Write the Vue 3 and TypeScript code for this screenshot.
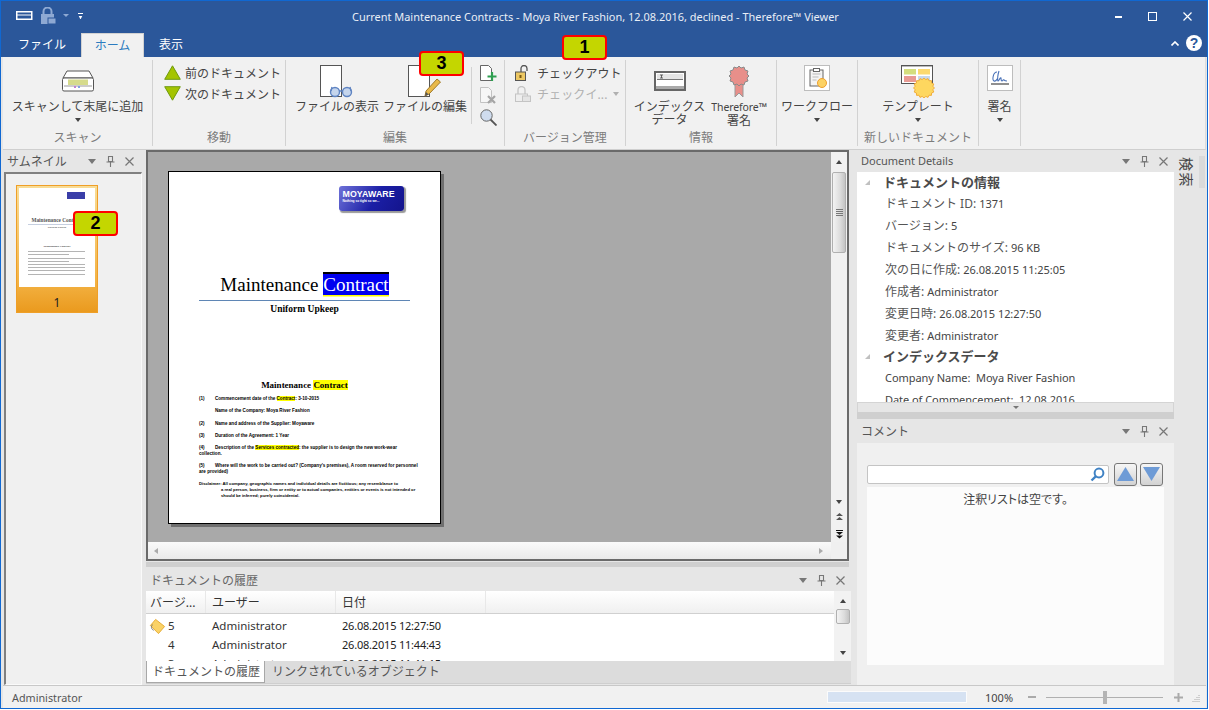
<script setup lang="ts">
const details = [
  ['ドキュメント ID:', '1371'],
  ['バージョン:', '5'],
  ['ドキュメントのサイズ:', '96 KB'],
  ['次の日に作成:', '26.08.2015 11:25:05'],
  ['作成者:', 'Administrator'],
  ['変更日時:', '26.08.2015 12:27:50'],
  ['変更者:', 'Administrator'],
]
const rows = [
  { v: '5', u: 'Administrator', d: '26.08.2015 12:27:50', tag: true },
  { v: '4', u: 'Administrator', d: '26.08.2015 11:44:43', tag: false },
  { v: '3', u: 'Administrator', d: '26.08.2015 11:41:15', tag: false },
]
</script>

<template>
  <div class="screen">
    <div class="window">
      <header class="titlebar">
        <div class="qat">
          <svg class="qa1" width="17" height="9" viewBox="0 0 17 9"><rect x=".75" y=".75" width="15" height="7.5" fill="none" stroke="#fff" stroke-width="1.5"/><path d="M1 4h15" stroke="#fff"/></svg>
          <svg class="qa2" width="17" height="17" viewBox="0 0 17 17"><path d="M3.5 7V4.5a4 4 0 0 1 8 0V7" fill="none" stroke="#8ea9d3" stroke-width="2"/><rect x="1" y="7" width="13" height="10" fill="#8ea9d3"/><rect x="8" y="11" width="8" height="6" fill="#8ea9d3" stroke="#2b579a"/></svg>
          <span class="qa-arrow dim"></span>
          <span class="qa-menu"></span>
        </div>
        <div class="title">Current Maintenance Contracts - Moya River Fashion, 12.08.2016, declined - Therefore™ Viewer</div>
        <div class="winctl">
          <svg width="7" height="3" viewBox="0 0 7 3"><rect width="7" height="2" y="1" fill="#fff"/></svg>
          <svg width="9" height="9" viewBox="0 0 9 9"><rect x=".5" y=".5" width="8" height="8" fill="none" stroke="#fff"/></svg>
          <svg width="9" height="9" viewBox="0 0 9 9"><path d="M.5.5l8 8M8.5.5l-8 8" stroke="#fff" stroke-width="1.2"/></svg>
        </div>
      </header>

      <nav class="tabs">
        <span class="tab">ファイル</span>
        <span class="tab active">ホーム</span>
        <span class="tab">表示</span>
        <div class="tabs-right">
          <svg width="8" height="5" viewBox="0 0 8 5"><path d="M.5 4.5L4 1l3.5 3.5" fill="none" stroke="#fff" stroke-width="1.6"/></svg>
          <span class="help">?</span>
        </div>
      </nav>

      <section class="ribbon">
        <div class="group g1">
          <div class="gbody center">
            <button class="big">
              <span class="ico">
                <svg width="34" height="22" viewBox="0 0 34 22"><path d="M6 1h22l4 7H2z" fill="#fff" stroke="#555"/><rect x="1.5" y="8" width="31" height="13" rx="1.5" fill="#fff" stroke="#555"/><rect x="7" y="9.5" width="20" height="5.5" fill="#d6db8c"/><path d="M3 16h28" stroke="#999"/><rect x="13" y="16" width="2" height="2" fill="#c080d0"/><rect x="17" y="16" width="2" height="2" fill="#80a0e0"/></svg>
              </span>
              <span class="lbl">スキャンして末尾に追加</span>
              <span class="drop"></span>
            </button>
          </div>
          <div class="gname">スキャン</div>
        </div>

        <div class="group g2">
          <div class="gbody rows">
            <div class="srow"><svg width="17" height="15" viewBox="0 0 17 15"><path d="M8.5 .8L16.3 14.3H.7z" fill="#a4c400" stroke="#6f9a10"/></svg><span>前のドキュメント</span></div>
            <div class="srow"><svg width="17" height="15" viewBox="0 0 17 15"><path d="M8.5 14.2L16.3 .7H.7z" fill="#a4c400" stroke="#6f9a10"/></svg><span>次のドキュメント</span></div>
          </div>
          <div class="gname">移動</div>
        </div>

        <div class="group g3">
          <div class="gbody g3body">
            <button class="big b-view">
              <span class="ico">
                <svg width="34" height="33" viewBox="0 0 34 33"><rect x=".5" y=".5" width="21" height="31" fill="#fff" stroke="#555"/><circle cx="15" cy="27" r="4.5" fill="#c5d5ec" stroke="#5f84c2" stroke-width="1.4"/><circle cx="27" cy="27" r="4.5" fill="#c5d5ec" stroke="#5f84c2" stroke-width="1.4"/><path d="M19 26h4M11 26l1-4M31 26l-1-4" stroke="#5f84c2" stroke-width="1.4" fill="none"/></svg>
              </span>
              <span class="lbl">ファイルの表示</span>
            </button>
            <button class="big b-edit">
              <span class="ico">
                <svg width="34" height="33" viewBox="0 0 34 33"><rect x=".5" y=".5" width="21" height="31" fill="#fff" stroke="#555"/><path d="M17 31l1-5L29 14l3.5 3L21 29z" fill="#e9b949" stroke="#a07a2a"/><path d="M17 31l1-4 2.6 2.4z" fill="#555"/></svg>
              </span>
              <span class="lbl">ファイルの編集</span>
            </button>
            <span class="vsep"></span>
            <div class="mini">
              <svg width="17" height="17" viewBox="0 0 17 17"><path d="M.5.5h8l3 3v12h-11z" fill="#fff" stroke="#666"/><path d="M12 7v9M7.5 11.5h9" stroke="#2e9e50" stroke-width="2.2"/></svg>
              <svg width="17" height="17" viewBox="0 0 17 17"><path d="M.5.5h8l3 3v12h-11z" fill="#f6f6f6" stroke="#c2c2c2"/><path d="M8 9l7 7M15 9l-7 7" stroke="#a5a5a5" stroke-width="2.2"/></svg>
              <svg width="17" height="17" viewBox="0 0 17 17"><circle cx="6.5" cy="6.5" r="5.7" fill="#cfdcee" stroke="#666"/><path d="M10.5 10.5l6 6" stroke="#555" stroke-width="1.8"/></svg>
            </div>
          </div>
          <div class="gname">編集</div>
        </div>

        <div class="group g4">
          <div class="gbody rows">
            <div class="srow lk"><svg width="16" height="16" viewBox="0 0 16 16"><path d="M6 7V3.5a3 3 0 0 1 6 0V6" fill="none" stroke="#555" stroke-width="1.3"/><rect x=".5" y="7" width="10" height="8.5" fill="#ecc763" stroke="#555"/><rect x="4.5" y="10" width="2" height="3" fill="#7a5a10"/></svg><span>チェックアウト</span></div>
            <div class="srow lk off"><svg width="16" height="16" viewBox="0 0 16 16"><path d="M3 8V4a3.5 3.5 0 0 1 7 0v4" fill="none" stroke="#c4c4c4" stroke-width="1.3"/><rect x=".5" y="8" width="12" height="7.5" fill="#eee" stroke="#c4c4c4"/><rect x="7.5" y="10" width="8" height="5.5" fill="#e4e4e4" stroke="#c4c4c4"/></svg><span>チェックイ...</span><i class="drop-inline"></i></div>
          </div>
          <div class="gname">バージョン管理</div>
        </div>

        <div class="group g5">
          <div class="gbody g5body">
            <button class="big b-index">
              <span class="ico">
                <svg width="32" height="20" viewBox="0 0 32 20"><rect x="1" y="1" width="30" height="18" fill="#fff" stroke="#666" stroke-width="2"/><rect x="3" y="3" width="26" height="5" fill="#e4e4e4"/><path d="M3 8.5h26" stroke="#777"/><path d="M6 4h3M7.5 4v3M6 7h3" stroke="#444" stroke-width=".8"/><path d="M2 16.5h28" stroke="#aaa" stroke-width="3"/></svg>
              </span>
              <span class="lbl two">インデックス<br>データ</span>
            </button>
            <button class="big b-sign">
              <span class="ico">
                <svg width="20" height="33" viewBox="0 0 20 33"><path d="M6 16v16l4-4 4 4V16z" fill="#e88f8a" stroke="#999"/><path d="M10 1l2 2 3-1 1 3 3 1-1 3 2 2-2 2 1 3-3 1-1 3-3-1-2 2-2-2-3 1-1-3-3-1 1-3-2-2 2-2-1-3 3-1 1-3 3 1z" fill="#e88f8a" stroke="#8b8b8b"/></svg>
              </span>
              <span class="lbl two"><small>Therefore™</small><br>署名</span>
            </button>
          </div>
          <div class="gname">情報</div>
        </div>

        <div class="group g6">
          <div class="gbody center">
            <button class="big">
              <span class="ico">
                <span class="sq">
                  <svg width="24" height="24" viewBox="0 0 24 24"><rect x="5" y="4" width="13" height="16" fill="#f4f4f4" stroke="#666"/><rect x="8.5" y="2.5" width="6" height="3" fill="#fff" stroke="#666"/><path d="M7.5 8h8M7.5 11h6M7.5 14h4" stroke="#bbb"/><circle cx="17" cy="17" r="4.5" fill="#fcd264" stroke="#ee9f2e"/></svg>
                </span>
              </span>
              <span class="lbl">ワークフロー</span>
              <span class="drop"></span>
            </button>
          </div>
        </div>

        <div class="group g7">
          <div class="gbody center">
            <button class="big">
              <span class="ico">
                <svg width="34" height="33" viewBox="0 0 34 33"><rect x=".5" y=".5" width="31" height="18" fill="#fff" stroke="#555"/><path d="M0 .7h32" stroke="#555" stroke-width="1.4"/><rect x="3" y="4" width="12" height="5.5" fill="#d4de7e"/><rect x="17" y="4" width="12" height="5.5" fill="#fcd96f"/><rect x="3" y="11" width="12" height="6" fill="#e89a94"/><rect x="17" y="11" width="12" height="6" fill="#c8d8ec"/><path d="M23 13l1.8 1.6 2.2-1 1 2.2 2.4-.2.2 2.4 2.2 1-1 2.2 1.6 1.8-1.6 1.8 1 2.2-2.2 1-.2 2.4-2.4-.2-1 2.2-2.2-1-1.8 1.6-1.8-1.6-2.2 1-1-2.2-2.4.2-.2-2.4-2.2-1 1-2.2-1.6-1.8 1.6-1.8-1-2.2 2.2-1 .2-2.4 2.4.2 1-2.2 2.2 1z" fill="#fed75f" stroke="#f1ad3a"/></svg>
              </span>
              <span class="lbl">テンプレート</span>
              <span class="drop"></span>
            </button>
          </div>
          <div class="gname">新しいドキュメント</div>
        </div>

        <div class="group g8">
          <div class="gbody center">
            <button class="big">
              <span class="ico">
                <span class="sq">
                  <svg width="24" height="24" viewBox="0 0 24 24"><path d="M9 6C5 6 4 14 6 15c2 1 3-2 4-3M11 5c-1 3-2 9-1 10 1 0 2-4 3-3 0 1 0 3 1 3 1 0 1-2 2-1s1 1 3 1" fill="none" stroke="#4a72b8" stroke-width="1.1"/><path d="M3 18h18" stroke="#444" stroke-width="1.2"/></svg>
                </span>
              </span>
              <span class="lbl">署名</span>
              <span class="drop"></span>
            </button>
          </div>
        </div>
      </section>

      <main class="workspace">
        <aside class="left">
          <div class="phead">
            <span class="ptitle">サムネイル</span>
            <span class="pctl pctl-left"><i class="tri"></i><svg width="9" height="11" viewBox="0 0 9 11"><path d="M2.5 .5h4v5h-4zM.5 6h8M4.5 6v5" fill="none" stroke="#777" stroke-width="1.1"/></svg><svg width="9" height="9" viewBox="0 0 9 9"><path d="M.5.5l8 8M8.5.5l-8 8" stroke="#777" stroke-width="1.2"/></svg></span>
          </div>
          <div class="thumbs">
            <div class="thumb">
              <div class="tpage">
                <div class="tlogo"></div>
                <div class="t-title">Maintenance Contract</div>
                <div class="t-rule"></div>
                <div class="t-sub">Uniform Upkeep</div>
                <div class="t-h">Maintenance Contract</div>
                <div class="t-l"></div><div class="t-l s"></div><div class="t-l"></div><div class="t-l s"></div><div class="t-l"></div><div class="t-l"></div><div class="t-l"></div><div class="t-l"></div>
              </div>
              <div class="tnum">1</div>
            </div>
          </div>
        </aside>

        <div class="center-col">
          <div class="viewer">
            <div class="vtop">
              <div class="canvas">
                <article class="page">
                  <div class="logo-row">
                    <div class="logo"><b>MOYAWARE</b><span>Nothing so tight so we...</span></div>
                  </div>
                  <h1 class="doc-title">Maintenance <mark class="sel">Contract</mark></h1>
                  <div class="doc-rule"></div>
                  <div class="doc-sub">Uniform Upkeep</div>
                  <h2 class="doc-h">Maintenance <mark>Contract</mark></h2>
                  <div class="cl"><em>(1)</em><span>Commencement date of the <mark>Contract</mark>: 3-10-2015</span></div>
                  <div class="cl g"><em></em><span>Name of the Company: Moya River Fashion</span></div>
                  <div class="cl"><em>(2)</em><span>Name and address of the Supplier: Moyaware</span></div>
                  <div class="cl"><em>(3)</em><span>Duration of the Agreement: 1 Year</span></div>
                  <div class="cl"><em>(4)</em><span>Description of the <mark>Services contracted</mark>: the supplier is to design the new work-wear</span></div>
                  <div class="cl2">collection.</div>
                  <div class="cl"><em>(5)</em><span>Where will the work to be carried out? (Company's premises), A room reserved for personnel</span></div>
                  <div class="cl2">are provided)</div>
                  <div class="disc">Disclaimer: All company, geographic names and individual details are fictitious; any resemblance to<br><span>a real person, business, firm or entity or to actual companies, entities or events is not intended or</span><br><span>should be inferred; purely coincidental.</span></div>
                </article>
              </div>
              <div class="vscroll">
                <i class="arr up"></i>
                <span class="thumbbar"><u></u></span>
                <span class="grow"></span>
                <i class="arr dn"></i>
                <svg class="jump" width="7" height="8" viewBox="0 0 7 8"><path d="M3.5 0L7 3H0zM3.5 4L7 7H0z" fill="#555"/></svg>
                <svg class="jump" width="7" height="9" viewBox="0 0 7 9"><path d="M0 .5h7" stroke="#111"/><path d="M0 2h7L3.5 5zM0 5.5h7L3.5 8.5z" fill="#111"/></svg>
              </div>
            </div>
            <div class="hscroll"><i class="arr lf"></i><span class="grow"></span><i class="arr rt"></i></div>
          </div>
          <div class="hsplit"></div>
          <div class="history">
            <div class="phead">
              <span class="ptitle muted">ドキュメントの履歴</span>
              <span class="pctl"><i class="tri"></i><svg width="9" height="11" viewBox="0 0 9 11"><path d="M2.5 .5h4v5h-4zM.5 6h8M4.5 6v5" fill="none" stroke="#777" stroke-width="1.1"/></svg><svg width="9" height="9" viewBox="0 0 9 9"><path d="M.5.5l8 8M8.5.5l-8 8" stroke="#777" stroke-width="1.2"/></svg></span>
            </div>
            <div class="hbody">
              <div class="table">
                <div class="thead">
                  <span class="c1">バージ...</span><span class="c2">ユーザー</span><span class="c3">日付</span>
                </div>
                <div v-for="r in rows" :key="r.v" class="trow">
                  <span class="c1 cell">
                    <svg v-if="r.tag" class="tag" width="17" height="17" viewBox="0 0 18 18"><path d="M7 1.5L16.5 9 10 16.5 1.5 8z" fill="#fad266" stroke="#e6a92e"/><path d="M4 7c-2 1-2 5 1 6" fill="none" stroke="#777"/></svg>
                    <span class="vnum">{{ r.v }}</span>
                  </span>
                  <span class="c2 cell">{{ r.u }}</span>
                  <span class="c3 cell date">{{ r.d }}</span>
                </div>
              </div>
              <div class="tscroll"><i class="arr up"></i><span class="thumbbar small"></span><span class="grow"></span><i class="arr dn"></i></div>
            </div>
            <div class="btabs">
              <span class="btab on">ドキュメントの履歴</span>
              <span class="btab">リンクされているオブジェクト</span>
            </div>
          </div>
        </div>

        <aside class="right">
          <div class="details">
            <div class="phead">
              <span class="ptitle latin">Document Details</span>
              <span class="pctl"><i class="tri"></i><svg width="9" height="11" viewBox="0 0 9 11"><path d="M2.5 .5h4v5h-4zM.5 6h8M4.5 6v5" fill="none" stroke="#777" stroke-width="1.1"/></svg><svg width="9" height="9" viewBox="0 0 9 9"><path d="M.5.5l8 8M8.5.5l-8 8" stroke="#777" stroke-width="1.2"/></svg></span>
            </div>
            <div class="dlist">
              <div class="dsec"><i class="corner"></i>ドキュメントの情報</div>
              <div v-for="d in details" :key="d[0]" class="ditem">{{ d[0] }} <span class="val">{{ d[1] }}</span></div>
              <div class="dsec second"><i class="corner"></i>インデックスデータ</div>
              <div class="ditem"><span class="val">Company Name:&nbsp; Moya River Fashion</span></div>
              <div class="ditem"><span class="val">Date of Commencement:&nbsp; 12.08.2016</span></div>
            </div>
            <div class="more"><i class="arr dn"></i></div>
          </div>
          <div class="hsplit tall"></div>
          <div class="comments">
            <div class="phead tallhead">
              <span class="ptitle">コメント</span>
              <span class="pctl"><i class="tri"></i><svg width="9" height="11" viewBox="0 0 9 11"><path d="M2.5 .5h4v5h-4zM.5 6h8M4.5 6v5" fill="none" stroke="#777" stroke-width="1.1"/></svg><svg width="9" height="9" viewBox="0 0 9 9"><path d="M.5.5l8 8M8.5.5l-8 8" stroke="#777" stroke-width="1.2"/></svg></span>
            </div>
            <div class="cbody">
              <div class="sline">
                <div class="search">
                  <svg width="15" height="15" viewBox="0 0 15 15"><circle cx="9" cy="6" r="4.4" fill="none" stroke="#3f82c4" stroke-width="2"/><path d="M6 9.2L1.5 13.5" stroke="#3f82c4" stroke-width="2.4"/></svg>
                </div>
                <button class="nav"><svg width="17" height="14" viewBox="0 0 17 14"><path d="M8.5 0L17 14H0z" fill="#6e9bd6"/></svg></button>
                <button class="nav"><svg width="17" height="14" viewBox="0 0 17 14"><path d="M8.5 14L17 0H0z" fill="#6e9bd6"/></svg></button>
              </div>
              <div class="clist">注釈リストは空です。</div>
            </div>
          </div>
        </aside>

        <div class="strip">
          <span class="vtext">検索</span>
          <span class="stripbar"></span>
        </div>
      </main>

      <footer class="status">
        <span class="suser">Administrator</span>
        <span class="grow"></span>
        <span class="prog"></span>
        <span class="pct">100%</span>
        <span class="minus"></span>
        <span class="track"><i></i></span>
        <svg class="plus" width="9" height="9" viewBox="0 0 9 9"><path d="M4.5 0v9M0 4.5h9" stroke="#aaa" stroke-width="2"/></svg>
        <svg class="grip" width="8" height="8" viewBox="0 0 8 8"><path d="M7 1v1M5 3v1M7 3v1M3 5v1M5 5v1M7 5v1M1 7v1M3 7v1M5 7v1M7 7v1" stroke="#aaa"/></svg>
      </footer>

      <span class="badge b1">1</span>
      <span class="badge b3">3</span>
      <span class="badge b2">2</span>
    </div>
    <div class="outside"></div>
  </div>
</template>

<style>
html, body { margin: 0; background: #fff; }
</style>

<style scoped>
.screen { width: 1209px; height: 710px; display: flex; overflow: hidden; font-family: "Noto Sans", "Noto Sans CJK JP", sans-serif; color: #444; font-size: 12px; }
.window { position: relative; width: 1208px; height: 709px; box-sizing: border-box; border: 1px solid #1068d2; background: #e6e6e6; display: flex; flex-direction: column; flex: none; }
.outside { width: 1px; background: #fff; }
button { all: unset; box-sizing: border-box; }
i { display: block; }
.grow { flex: 1; }

.titlebar { height: 32px; background: #2b579a; display: flex; align-items: center; position: relative; flex: none; }
.qat { display: flex; align-items: center; padding-left: 15px; }
.qa1 { margin-right: 7px; margin-top: -4px; }
.qa2 { margin-top: -4px; }
.qa-arrow { width: 0; height: 0; border: 3px solid transparent; border-top: 3px solid #8ea9d3; margin: 0 0 0 6px; }
.qa-menu { width: 5px; height: 6px; margin-left: 9px; margin-top: -2px; border-top: 1px solid #fff; position: relative; background: linear-gradient(#fff,#fff) center 2px / 5px 3px no-repeat; clip-path: polygon(0 0,100% 0,100% 30%,100% 30%,50% 100%,0 30%); }
.title { position: absolute; left: 351px; top: 8px; color: #e9eef6; font-size: 10.96px; line-height: 16px; white-space: nowrap; }
.winctl { margin-left: auto; display: flex; align-items: center; width: 92px; gap: 26px; margin-top: -1px; padding-right: 15px; box-sizing: border-box; justify-content: flex-end; }

.tabs { height: 24px; background: #2b579a; display: flex; align-items: stretch; position: relative; flex: none; padding-left: 2px; }
.tab { color: #fff; padding: 0 15px; line-height: 24px; font-size: 12px; white-space: nowrap; }
.tab.active { background: #f1f1f1; color: #2b7bc0; border: 1px solid #d2d2d2; border-bottom: 0; padding: 0; box-sizing: border-box; width: 63px; line-height: 23px; margin: 0; text-align: center; }
.tabs-right { position: absolute; right: 5px; top: 0; display: flex; align-items: center; gap: 7px; height: 20px; }
.help { width: 16px; height: 16px; border-radius: 50%; background: #fff; color: #2b579a; font: bold 14px/16px "Liberation Sans", sans-serif; text-align: center; margin-top: 0; }

.ribbon { height: 93px; flex: none; margin: 0 1px 0 2px; background: #f1f1f1; border-bottom: 1px solid #cfcfcf; border-right: 1px solid #dcdcdc; box-sizing: border-box; display: flex; padding-top: 3px; }
.group { display: flex; flex-direction: column; border-right: 1px solid #d2d2d2; box-sizing: border-box; height: 86px; flex: none; }
.g1 { width: 150px; } .g2 { width: 133px; } .g3 { width: 219px; } .g4 { width: 121px; }
.g5 { width: 151px; } .g6 { width: 81px; } .g7 { width: 121px; } .g8 { width: 42px; }
.gbody { flex: 1; display: flex; min-height: 0; }
.gbody.center { justify-content: center; }
.gname { height: 18px; line-height: 20px; text-align: center; color: #7c7c7c; font-size: 12px; white-space: nowrap; }
.big { display: flex; flex-direction: column; align-items: center; white-space: nowrap; color: #444; }
.ico { height: 40px; box-sizing: border-box; padding-top: 2px; display: flex; align-items: center; justify-content: center; }
.lbl { line-height: 13px; margin-top: 0; font-size: 12px; }
.lbl.two { line-height: 13px; text-align: center; }
.lbl small { font-size: 10.5px; font-family: "Noto Sans", sans-serif; letter-spacing: -.1px; }
.drop { width: 0; height: 0; border: 3px solid transparent; border-top: 4px solid #444; margin-top: 5px; }
.sq { width: 26px; height: 26px; box-sizing: border-box; border: 1px solid #bdbdbd; background: #fff; display: flex; align-items: center; justify-content: center; margin-top: -6px; }

.rows { flex-direction: column; padding-top: 2px; }
.srow { height: 21px; display: flex; align-items: center; white-space: nowrap; padding-left: 11px; gap: 4px; font-size: 12px; }
.srow svg { flex: none; }
.srow.lk { padding-left: 10px; gap: 6px; font-size: 12px; letter-spacing: .1px; }
.srow.off { color: #b0b0b0; }
.drop-inline { width: 0; height: 0; border: 3px solid transparent; border-top: 4px solid #b0b0b0; margin: 3px 0 0 0; }

.g3body { position: relative; padding-left: 7px; }
.b-view { width: 88px; }
.b-edit { width: 88px; }
.vsep { width: 1px; height: 57px; margin: 7px 0 0 2px; background: #d2d2d2; }
.mini { display: flex; flex-direction: column; gap: 5px; padding: 5px 0 0 8px; }

.g5body { padding-left: 6px; }
.b-index { width: 75px; }
.b-sign { width: 64px; margin-left: 0; }

.workspace { flex: 1; min-height: 0; display: flex; padding-left: 2px; }
.left { width: 139px; flex: none; display: flex; flex-direction: column; }
.phead { height: 22px; flex: none; display: flex; align-items: center; padding: 0 4px; justify-content: space-between; background: #e6e6e6; }
.ptitle { font-size: 12px; color: #555; white-space: nowrap; }
.ptitle.muted { color: #666; }
.ptitle.latin { font-size: 11px; margin-top: -1px; }
.pctl { display: flex; align-items: center; gap: 10px; margin-right: 2.5px; }
.pctl-left { margin-right: 4.5px; }
.tri { width: 0; height: 0; border: 4.5px solid transparent; border-top: 5px solid #777; border-bottom: 0; }

.thumbs { flex: 1; margin-left: 1px; margin-right: 0; border-top: 2px solid #808080; border-left: 2px solid #808080; background: #f0f0f0; box-sizing: border-box; padding: 11px 0 0 10px; border-right: 1px solid #fafafa; border-bottom: 1px solid #fafafa; }
.thumb { width: 82px; height: 128px; box-sizing: border-box; padding: 2px 2px 0; background: linear-gradient(#f8dd97, #f3b243 76%, #ea9a1e); border: 1px solid #ef9f27; display: flex; flex-direction: column; }
.tpage { height: 99px; flex: none; background: #fff; position: relative; padding-top: 29px; box-sizing: border-box; overflow: hidden; }
.tlogo { position: absolute; right: 10px; top: 4px; width: 18px; height: 7px; background: #3a3ea8; }
.t-title { font: 700 5.3px/7px "Liberation Serif", serif; text-align: center; color: #555; white-space: nowrap; overflow: hidden; }
.t-rule { height: 1px; margin: 0 9px; background: #c6cfe0; }
.t-sub { font: 700 2.6px/5px "Liberation Serif", serif; text-align: center; color: #666; }
.t-h { font: 700 2.8px/4px "Liberation Serif", serif; text-align: center; color: #444; margin: 15px 0 1px; }
.t-l { height: 1px; background: #b4b4b4; margin: 2.2px 10px 0 9px; }
.t-l.s { margin-right: 26px; }
.tnum { flex: 1; min-height: 0; text-align: center; line-height: 31px; color: #222; font-size: 12px; }

.center-col { width: 707px; margin-left: 4px; flex: none; display: flex; flex-direction: column; }
.viewer { height: 411px; flex: none; width: 703px; border: 2px solid #6a6a6a; box-sizing: border-box; display: flex; flex-direction: column; background: #f0f0f0; }
.vtop { flex: 1; min-height: 0; display: flex; }
.canvas { width: 683px; flex: none; background: #a9a9a9; padding: 19px 0 0 20px; box-sizing: border-box; }
.page { width: 273px; height: 353px; box-sizing: border-box; background: #fff; border: 1.5px solid #000; box-shadow: 3px 3px 0 #6f6f6f; color: #000; font-family: "Liberation Serif", serif; position: relative; padding: 0 30px; overflow: hidden; }
.logo-row { display: flex; justify-content: flex-end; height: 102px; padding-top: 13.5px; margin-right: 6.5px; box-sizing: border-box; }
.logo { width: 65px; height: 25px; border-radius: 3px; background: linear-gradient(120deg, #6f72d8, #1b1fa6 55%, #14148c); box-shadow: 1.5px 1.5px 1px #999; color: #fff; font-family: "Liberation Sans", sans-serif; display: flex; flex-direction: column; padding: 4px 0 0 4px; box-sizing: border-box; line-height: 1; }
.logo b { font-size: 8.8px; letter-spacing: .1px; font-weight: 700; }
.logo span { font-size: 3.2px; margin-top: 2px; font-weight: 700; white-space: nowrap; }
.doc-title { margin: 0 -4px; font-size: 19px; font-weight: 400; line-height: 21px; text-align: center; white-space: nowrap; height: 25px; }
.doc-title .sel { background: #0000f0; color: #fff; box-shadow: 0 1.5px 0 #ffff00, 0 -2px 0 #000; padding: 0; }
.doc-rule { height: 1px; background: #5f86b5; margin-top: 1px; }
.doc-sub { text-align: center; font-size: 9.5px; font-weight: 700; line-height: 15px; margin-top: 1px; }
.doc-h { margin: 62px 0 5px; font-size: 9px; font-weight: 700; line-height: 12px; text-align: center; }
.page mark { background: #ffff00; color: inherit; }
.page .sel { background: #0000f0; color: #fff; }
.cl { display: flex; font: 700 4.6px/6px "Liberation Sans", sans-serif; margin-bottom: 6px; white-space: nowrap; }
.cl em { width: 16px; font-style: normal; flex: none; }
.cl.g { margin-bottom: 6.5px; }
.cl2 { font: 700 4.6px/6px "Liberation Sans", sans-serif; margin: -6px 0 5.5px; padding-top: .5px; }
.disc { font: 700 4.2px/6px "Liberation Sans", sans-serif; margin: 0 -30px 0 0; padding-right: 30px; white-space: nowrap; }
.disc span { margin-left: 22px; }
.vscroll { width: 16px; flex: none; display: flex; flex-direction: column; align-items: center; background: #f1f1f1; padding-bottom: 3px; box-sizing: border-box; }
.thumbbar { width: 14px; height: 81px; flex: none; box-sizing: border-box; margin-top: 8px; border: 1px solid #b0b0b0; border-radius: 2px; background: linear-gradient(90deg, #f3f3f3, #dcdcdc 60%, #c4c4c4); display: flex; align-items: center; justify-content: center; }
.thumbbar u { width: 7px; height: 7px; text-decoration: none; background: repeating-linear-gradient(#777 0 1px, transparent 1px 2px); }
.thumbbar.small { height: 15px; margin-top: 6px; }
.jump { flex: none; margin-bottom: 9px; }
.jump:last-child { margin-bottom: 0; }
.arr { width: 0; height: 0; flex: none; border: 3.5px solid transparent; }
.arr.up { border-bottom: 4px solid #444; border-top: 0; margin-top: 8px; }
.arr.dn { border-top: 4px solid #444; border-bottom: 0; margin-bottom: 9px; }
.arr.lf { border-right: 4px solid #aaa; border-left: 0; margin-left: 6px; }
.arr.rt { border-left: 4px solid #aaa; border-right: 0; margin-right: 8px; }
.hscroll { height: 17px; flex: none; display: flex; align-items: center; background: linear-gradient(#fafafa, #eaeaea); width: 683px; }
.hsplit { height: 7px; flex: none; margin-top: 1px; background: linear-gradient(#cfcfcf 0 5px, #e6e6e6 5px); width: 703px; }
.hsplit.tall { width: 317px; height: 7px; margin: 0; background: #cfcfcf; }

.history { flex: 1; min-height: 0; display: flex; flex-direction: column; width: 705px; }
.hbody { height: 70px; flex: none; display: flex; background: #fff; }
.table { flex: 1; min-width: 0; overflow: hidden; }
.thead { height: 23px; display: flex; background: linear-gradient(#fff, #f0f0f0); border-bottom: 1px solid #d0d0d0; box-sizing: border-box; margin-bottom: 2px; }
.thead span { border-right: 1px solid #e8e8e8; box-sizing: border-box; padding-left: 4px; line-height: 24px; color: #333; font-size: 12px; white-space: nowrap; }
.c1 { width: 60px; flex: none; } .c2 { width: 130px; flex: none; } .c3 { width: 150px; flex: none; }
.thead .c2, .thead .c3 { padding-left: 6px; }
.trow { height: 19px; display: flex; align-items: center; color: #333; font-size: 11.5px; position: relative; }
.cell { padding-left: 6px; box-sizing: border-box; white-space: nowrap; }
.c1.cell { padding-left: 22px; position: relative; }
.tag { position: absolute; left: 3px; top: 0; }
.date { font-size: 11px; letter-spacing: -.2px; color: #222; }
.tscroll { width: 17px; flex: none; display: flex; flex-direction: column; align-items: center; background: #f2f2f2; }
.tscroll .arr.dn { margin-bottom: 6px; }
.btabs { height: 23px; flex: none; display: flex; align-items: stretch; background: #dcdcdc; border-bottom: 1px solid #cfcfcf; box-sizing: border-box; }
.btab { padding: 0 7px; line-height: 21px; color: #555; white-space: nowrap; font-size: 12px; }
.btab.on { background: #fff; border: 1px solid #a8a8a8; border-top: 0; box-sizing: border-box; width: 119px; padding: 0 0 0 5px; color: #555; }

.right { width: 317px; margin-left: 4px; flex: none; display: flex; flex-direction: column; }
.details { height: 262px; flex: none; display: flex; flex-direction: column; }
.dlist { flex: 1; min-height: 0; overflow: hidden; background: #fff; padding-top: 1px; }
.dsec { height: 22px; line-height: 19px; font-size: 13px; font-weight: 700; color: #4a4a4a; padding-left: 26px; position: relative; }
.dsec.second { margin-top: -2px; }
.corner { position: absolute; left: 8px; top: 7px; width: 0; height: 0; border-left: 5px solid transparent; border-bottom: 5px solid #c0c0c0; }
.ditem { height: 22px; line-height: 18px; padding-left: 28px; font-size: 12px; color: #555; white-space: nowrap; }
.val { font-size: 11px; letter-spacing: -.05px; color: #444; }
.more { height: 10px; flex: none; background: #e6e6e6; border: 1px solid #d4d4d4; border-bottom: 0; box-sizing: border-box; display: flex; justify-content: center; padding-top: 3px; }
.more .arr { border-width: 3px; border-top: 3px solid #777; border-bottom: 0; margin: 0; }
.comments { flex: 1; min-height: 0; display: flex; flex-direction: column; }
.tallhead { height: 24px; }
.cbody { flex: 1; background: #f0f0f0; padding: 19px 10px 20px; display: flex; flex-direction: column; min-height: 0; }
.sline { display: flex; align-items: center; height: 24px; gap: 3px; flex: none; }
.search { width: 242px; height: 19px; box-sizing: border-box; border: 1px solid #c4c4c4; border-radius: 2px; background: #fff; display: flex; justify-content: flex-end; align-items: center; padding-right: 3px; margin-right: 2px; }
.nav { width: 23px; height: 23px; box-sizing: border-box; border: 1px solid #777; border-radius: 3px; background: linear-gradient(#f6f6f6, #d2d2d2); display: flex; align-items: center; justify-content: center; }
.clist { flex: 1; background: #fcfcfc; text-align: center; line-height: 26px; color: #444; margin-top: 1px; font-size: 12px; font-feature-settings: "palt"; }

.strip { flex: 1; position: relative; display: flex; padding: 6px 1px 0 5px; gap: 6px; align-items: flex-start; background: #e6e6e6; }
.vtext { writing-mode: vertical-rl; text-orientation: sideways; font-size: 14px; line-height: 14px; color: #444; letter-spacing: 1.5px; margin-top: 1px; }
.stripbar { width: 6px; height: 32px; background: #dadada; }

.status { height: 23px; flex: none; margin: 0 1px 0 2px; background: #f1f1f1; border-top: 1px solid #c8c8c8; box-sizing: border-box; display: flex; align-items: center; padding-left: 9px; }
.suser { font-size: 10.8px; color: #555; }
.prog { width: 140px; height: 12px; box-sizing: border-box; border: 1px solid #fbfbfb; background: #d6e2f2; }
.pct { width: 43px; margin-left: 18px; font-size: 11px; color: #444; }
.minus { width: 8px; height: 2px; background: #aaa; }
.track { width: 117px; height: 1px; background: #b0b0b0; margin-left: 10px; position: relative; }
.track i { position: absolute; left: 57px; top: -6px; width: 4px; height: 13px; background: #b4b4b4; }
.plus { margin-left: 11px; }
.grip { margin: 2px 6px 0 9px; }

.badge { position: absolute; width: 45px; height: 25px; box-sizing: border-box; border: 2px solid #f00; border-radius: 4px; background: #c4d600; color: #000; font: 700 18px/21px "Liberation Sans", sans-serif; text-align: center; }
.b1 { left: 561px; top: 34px; }
.b3 { left: 418px; top: 50px; }
.b2 { left: 72px; top: 210px; }
</style>
